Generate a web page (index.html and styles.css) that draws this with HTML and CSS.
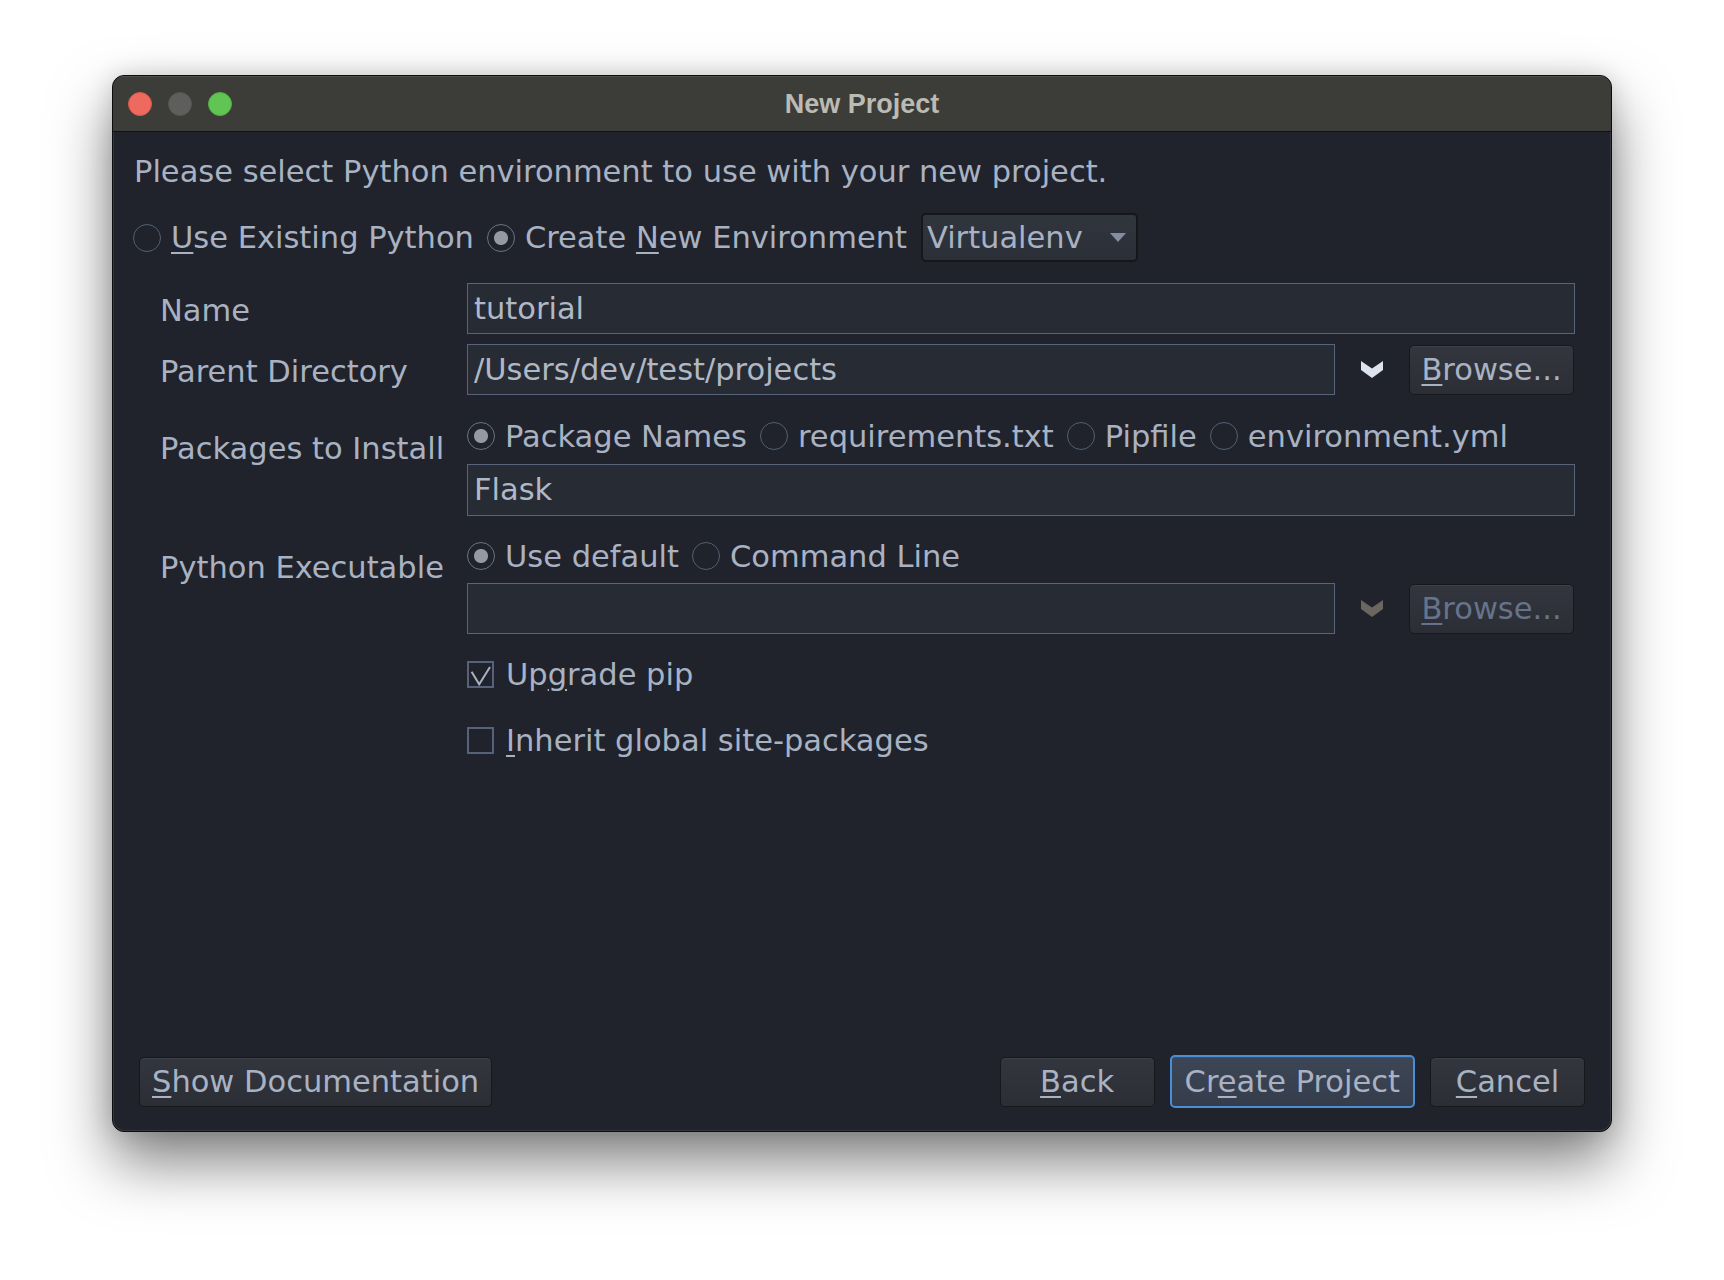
FILE: index.html
```html
<!DOCTYPE html>
<html lang="en">
<head>
	<meta charset="UTF-8">
	<title>New Project</title>
	<link rel="stylesheet" href="styles.css">
</head>
<body>
<div class="window">
	<div class="titlebar">
		<div class="lights">
			<span class="light red"></span>
			<span class="light grey"></span>
			<span class="light green"></span>
		</div>
		<div class="title">New Project</div>
		<div></div>
	</div>

	<div class="content">
		<p class="intro">Please select Python environment to use with your new project.</p>

		<div class="env_row">
			<div class="radio"><span class="dot"></span><span><u>U</u>se Existing Python</span></div>
			<div class="radio on"><span class="dot"></span><span>Create <u>N</u>ew Environment</span></div>
			<div class="combo"><span>Virtualenv</span><span class="caret"></span></div>
		</div>

		<div class="form">
			<div class="form_row row_name">
				<div class="label">Name</div>
				<div class="field">tutorial</div>
			</div>

			<div class="form_row row_parent">
				<div class="label">Parent Directory</div>
				<div class="path_line">
					<div class="field path">/Users/dev/test/projects</div>
					<div class="chevron">
						<svg width="22" height="17" viewBox="0 0 22 17"><path d="M0 0 L11 7.5 L22 0 L22 9 L11 17 L0 9 Z" fill="#dde3ee"/></svg>
					</div>
					<button class="btn browse"><span><u>B</u>rowse...</span></button>
				</div>
			</div>

			<div class="form_row row_packages">
				<div class="label label_top">Packages to Install</div>
				<div class="stack">
					<div class="options">
						<div class="radio on"><span class="dot"></span><span>Package Names</span></div>
						<div class="radio"><span class="dot"></span><span>requirements.txt</span></div>
						<div class="radio"><span class="dot"></span><span>Pipfile</span></div>
						<div class="radio"><span class="dot"></span><span>environment.yml</span></div>
					</div>
					<div class="field under">Flask</div>
				</div>
			</div>

			<div class="form_row row_exec">
				<div class="label label_top">Python Executable</div>
				<div class="stack">
					<div class="options">
						<div class="radio on"><span class="dot"></span><span>Use default</span></div>
						<div class="radio"><span class="dot"></span><span>Command Line</span></div>
					</div>
					<div class="path_line under">
						<div class="field path"></div>
						<div class="chevron">
							<svg width="22" height="17" viewBox="0 0 22 17"><path d="M0 0 L11 7.5 L22 0 L22 9 L11 17 L0 9 Z" fill="#6b665f"/></svg>
						</div>
						<button class="btn browse disabled"><span><u>B</u>rowse...</span></button>
					</div>
				</div>
			</div>

			<div class="form_row row_check first_check">
				<div class="label"></div>
				<div class="checkbox">
					<span class="box">
						<svg width="23" height="23" viewBox="0 0 23 23"><polyline points="2.6,8.7 10.2,21.3 21,4" fill="none" stroke="#a9b2c2" stroke-width="2"/></svg>
					</span>
					<span>Up<u>g</u>rade pip</span>
				</div>
			</div>

			<div class="form_row row_check">
				<div class="label"></div>
				<div class="checkbox">
					<span class="box"></span>
					<span><u>I</u>nherit global site-packages</span>
				</div>
			</div>
		</div>

		<div class="footer">
			<button class="btn"><span><u>S</u>how Documentation</span></button>
			<div class="footer_right">
				<button class="btn"><span><u>B</u>ack</span></button>
				<button class="btn primary"><span>Cr<u>e</u>ate Project</span></button>
				<button class="btn"><span><u>C</u>ancel</span></button>
			</div>
		</div>
	</div>
</div>
</body>
</html>
```

FILE: styles.css
```css
body{
	margin: 0;
	background: #ffffff;
	font-family: "DejaVu Sans", "Liberation Sans", sans-serif;
	font-size: 30.5px;
	color: #a9b2c2;
}
u{
	text-decoration: underline;
	text-decoration-thickness: 2px;
	text-underline-offset: 4px;
}
.window{
	width: 1500px;
	height: 1057px;
	margin: 75px 0 148px 112px;
	box-sizing: border-box;
	border: 1px solid #0c0d0f;
	border-radius: 12px;
	overflow: hidden;
	background: #20232b;
	box-shadow: 0 30px 60px rgba(0,0,0,0.5), 0 0 24px rgba(0,0,0,0.14);
	display: flex;
	flex-direction: column;
}

/* title bar */
.titlebar{
	height: 55px;
	flex: none;
	background: #3c3c38;
	border-bottom: 1px solid #101113;
	box-shadow: inset 0 1px 0 rgba(255,255,255,0.1);
	display: grid;
	grid-template-columns: 1fr auto 1fr;
	align-items: center;
}
.lights{
	display: flex;
	gap: 16px;
	padding-left: 15px;
}
.light{
	width: 24px;
	height: 24px;
	border-radius: 50%;
	box-sizing: border-box;
}
.red{
	background: #ee6a5f;
	border: 1px solid #d5594e;
}
.grey{
	background: #5e5e5c;
	border: 1px solid #555553;
}
.green{
	background: #61c554;
	border: 1px solid #52ad46;
}
.title{
	font-family: "Liberation Sans", sans-serif;
	font-weight: bold;
	font-size: 27px;
	color: #bbbbb3;
	padding-top: 2px;
}

/* body */
.content{
	flex: 1;
	display: flex;
	flex-direction: column;
	padding: 22px 25px 22px 20px;
	border: 1px solid #34373d;
	border-top: none;
	border-radius: 0 0 11px 11px;
}
.intro{
	margin: 0;
	line-height: 36px;
	white-space: nowrap;
}
.env_row{
	display: flex;
	align-items: center;
	margin-top: 23px;
	height: 49px;
	margin-left: -1px;
}
.env_row .radio + .radio{
	margin-left: 13px;
}
.radio{
	display: flex;
	align-items: center;
	gap: 10px;
	white-space: nowrap;
}
.dot{
	width: 28px;
	height: 28px;
	flex: none;
	box-sizing: border-box;
	border: 1.5px solid #535f74;
	border-radius: 50%;
}
.radio.on .dot{
	border-color: #6a7484;
	background: radial-gradient(circle, #9499a3 0 6.5px, transparent 7.5px);
}
.combo{
	width: 217px;
	height: 49px;
	margin-left: 14px;
	box-sizing: border-box;
	border: 2px solid #15171b;
	border-radius: 5px;
	background: linear-gradient(#31353d, #2b2f37);
	display: flex;
	align-items: center;
	justify-content: space-between;
	padding: 0 10px 0 4px;
}
.caret{
	width: 0;
	height: 0;
	border-left: 8px solid transparent;
	border-right: 8px solid transparent;
	border-top: 9px solid #858e9e;
}

/* form */
.form{
	margin: 0 10px 0 26px;
}
.form_row{
	display: flex;
}
.label{
	width: 307px;
	flex: none;
	white-space: nowrap;
}
.row_name{
	margin-top: 21px;
}
.row_name .label{
	line-height: 46px;
	padding-top: 5px;
}
.row_parent{
	margin-top: 10px;
}
.row_parent .label{
	line-height: 46px;
	padding-top: 5px;
}
.row_packages{
	margin-top: 21px;
}
.row_exec{
	margin-top: 20px;
}
.label_top{
	line-height: 40px;
	padding-top: 13px;
}
.row_exec .label_top{
	padding-top: 12px;
}
.field{
	flex: 1;
	height: 51px;
	box-sizing: border-box;
	border: 1.5px solid #58647a;
	background: #272b33;
	color: #b0b8c6;
	padding: 0 6px;
	line-height: 50px;
	white-space: nowrap;
}
.stack{
	flex: 1;
	display: flex;
	flex-direction: column;
}
.options{
	display: flex;
	align-items: center;
	height: 40px;
	gap: 13px;
}
.under{
	margin-top: 8px;
}
.row_exec .under{
	margin-top: 7px;
}
.path_line{
	flex: 1;
	display: flex;
	align-items: center;
}
.field.path{
	flex: none;
	width: 868px;
}
.chevron{
	width: 74px;
	display: flex;
	justify-content: center;
}
.browse{
	width: 165px;
	margin-right: 3px;
}
.first_check{
	margin-top: 20px;
}
.row_check + .row_check{
	margin-top: 26px;
}
.checkbox{
	display: flex;
	align-items: center;
	gap: 12px;
	height: 40px;
	white-space: nowrap;
}
.box{
	width: 27px;
	height: 27px;
	flex: none;
	box-sizing: border-box;
	border: 2px solid #56627a;
	display: flex;
	align-items: center;
	justify-content: center;
}

/* buttons */
.btn{
	height: 50px;
	min-width: 155px;
	box-sizing: border-box;
	padding: 0 12px;
	border: 1.5px solid #16181c;
	border-radius: 5px;
	background: linear-gradient(#33363e, #2b2e35);
	box-shadow: inset 0 1px 0 rgba(255,255,255,0.05);
	color: #a9b2c2;
	font: inherit;
	display: flex;
	align-items: center;
	justify-content: center;
	white-space: nowrap;
}
.btn.disabled{
	color: #66738a;
}
.btn.primary{
	height: 53px;
	border: 2px solid #4a8ed8;
	background: linear-gradient(#3d4656, #353d4b);
	padding: 0 13px;
}
.footer{
	margin-top: auto;
	margin-left: 5px;
	display: flex;
	align-items: center;
	justify-content: space-between;
}
.footer_right{
	display: flex;
	align-items: center;
	gap: 15px;
}
```
